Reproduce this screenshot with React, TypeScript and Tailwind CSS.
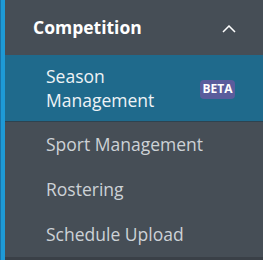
const subItems = ['Sport Management', 'Rostering', 'Schedule Upload'];

export default function App() {
  return (
    <div className="w-[263px] h-[260px] flex bg-[#464e56] overflow-hidden" style={{ fontFamily: '"Open Sans", sans-serif' }}>
      {/* Left accent strip */}
      <div className="w-[1px] bg-[#1b74a8]" />
      <div className="w-[4px] bg-[#1e9ad6]" />

      <div className="flex-1 flex flex-col">
        {/* Section header */}
        <div className="h-[55px] flex items-center justify-between pl-[28px] pr-[27px]">
          <span className="text-[17.5px] font-bold text-white">Competition</span>
          <svg width="14" height="8" viewBox="0 0 14 8" fill="none" className="mt-[3px]">
            <polyline points="1,7 7,1 13,7" stroke="#ffffff" strokeWidth="1.5" />
          </svg>
        </div>

        {/* Active item */}
        <div className="h-[67px] flex items-center bg-[#1f6a8c] border-b border-[#2d4350] pl-[41px] pr-[28px]">
          <span className="w-[140px] text-[17.5px] leading-[24px] text-[#eef3f6]">Season Management</span>
          <span className="ml-auto w-[35px] h-[19px] flex items-center justify-center rounded-sm bg-[#5a5c9c] text-white text-[12px] font-bold mt-[2px]">BETA</span>
        </div>

        {/* Other items */}
        {subItems.map(item => (
          <div key={item} className="h-[45px] flex items-center pl-[41px]">
            <span className="text-[17.5px] text-[#cdd2d6]">{item}</span>
          </div>
        ))}
        <div className="flex-1 bg-[#3a4047]" />
      </div>
    </div>
  );
}
